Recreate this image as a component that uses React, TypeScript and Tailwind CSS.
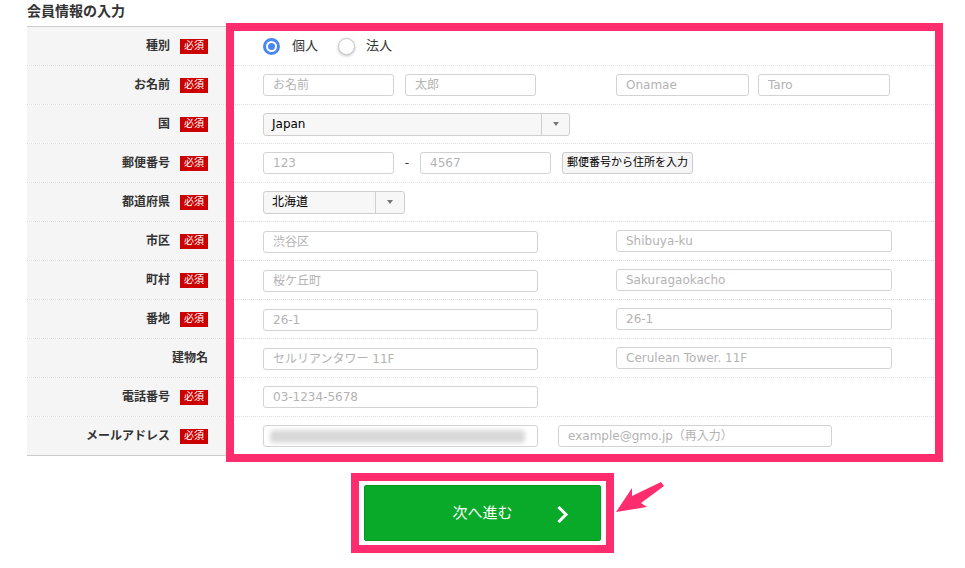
import type { ReactNode } from "react";

function Required() {
  return (
    <span className="ml-[10px] flex h-[15px] w-[28px] items-center justify-center bg-[#cc0000] text-[10px] font-normal leading-none text-white">
      必須
    </span>
  );
}

function Field({ ph, className }: { ph: string; className: string }) {
  return (
    <input
      readOnly
      placeholder={ph}
      className={
        "h-[22px] rounded-[3px] border border-[#d3d3d3] bg-white px-[9px] text-[12px] text-[#333] outline-none placeholder:text-[#b3b3b3] " +
        className
      }
    />
  );
}

function Caret() {
  return <span className="h-0 w-0 border-x-[3.5px] border-t-[4px] border-x-transparent border-t-[#777]" />;
}

function Row({
  label,
  req = true,
  last = false,
  children,
}: {
  label: string;
  req?: boolean;
  last?: boolean;
  children: ReactNode;
}) {
  const edge = last
    ? "border-b border-solid border-[#cccccc]"
    : "border-b border-dotted border-[#dddddd]";
  return (
    <div className={"flex h-[39px] " + edge}>
      <div className="flex w-[199px] shrink-0 items-center justify-end bg-[#f5f5f5] pr-[18px] text-[12px] font-bold text-[#333]">
        <span>{label}</span>
        {req && <Required />}
      </div>
      <div className="flex flex-1 items-center pl-[37px]">{children}</div>
    </div>
  );
}

export default function App() {
  return (
    <div className="relative h-[568px] w-[965px] overflow-hidden bg-white font-['DejaVu_Sans','Noto_Sans_CJK_JP',sans-serif] text-[#333]">
      <div className="pl-[27px]">
        <h1 className="h-[26px] pt-[2px] text-[14px] font-bold leading-[18px] text-[#333]">会員情報の入力</h1>

        <div className="w-[913px] border-t border-[#cccccc]">
          <Row label="種別">
            <div className="flex items-center text-[13px] text-[#333]">
              <span className="flex h-[17px] w-[17px] items-center justify-center rounded-full border-[3px] border-[#4a86f0]">
                <span className="h-[7px] w-[7px] rounded-full bg-[#4a86f0]" />
              </span>
              <span className="ml-[12px]">個人</span>
              <span className="ml-[20px] h-[17px] w-[17px] rounded-full border border-[#c8c8c8] bg-white shadow-[0_1px_3px_rgba(0,0,0,0.25)]" />
              <span className="ml-[11px]">法人</span>
            </div>
          </Row>

          <Row label="お名前">
            <div className="flex w-[353px] gap-[11px]">
              <Field ph="お名前" className="w-[131px]" />
              <Field ph="太郎" className="w-[131px]" />
            </div>
            <div className="flex gap-[9px]">
              <Field ph="Onamae" className="w-[133px]" />
              <Field ph="Taro" className="w-[132px]" />
            </div>
          </Row>

          <Row label="国">
            <div className="flex h-[23px] w-[307px] items-center rounded-[3px] border border-[#cfcfcf] bg-[#f7f7f7]">
              <span className="flex-1 pl-[8px] text-[12px] text-black">Japan</span>
              <span className="flex h-full w-[28px] items-center justify-center border-l border-[#cfcfcf]">
                <Caret />
              </span>
            </div>
          </Row>

          <Row label="郵便番号">
            <Field ph="123" className="w-[131px]" />
            <span className="w-[26px] text-center text-[12px] text-[#333]">-</span>
            <Field ph="4567" className="w-[131px]" />
            <button
              type="button"
              className="ml-[11px] h-[22px] w-[131px] rounded-[3px] border border-[#cccccc] bg-[#f5f5f5] text-[11px] text-black"
            >
              郵便番号から住所を入力
            </button>
          </Row>

          <Row label="都道府県">
            <div className="flex h-[23px] w-[142px] items-center rounded-[3px] border border-[#cfcfcf] bg-[#f7f7f7]">
              <span className="flex-1 pl-[8px] text-[12px] text-black">北海道</span>
              <span className="flex h-full w-[29px] items-center justify-center border-l border-[#cfcfcf]">
                <Caret />
              </span>
            </div>
          </Row>

          <Row label="市区">
            <div className="w-[353px]">
              <Field ph="渋谷区" className="w-[275px]" />
            </div>
            <Field ph="Shibuya-ku" className="w-[276px]" />
          </Row>

          <Row label="町村">
            <div className="w-[353px]">
              <Field ph="桜ケ丘町" className="w-[275px]" />
            </div>
            <Field ph="Sakuragaokacho" className="w-[276px]" />
          </Row>

          <Row label="番地">
            <div className="w-[353px]">
              <Field ph="26-1" className="w-[275px]" />
            </div>
            <Field ph="26-1" className="w-[276px]" />
          </Row>

          <Row label="建物名" req={false}>
            <div className="w-[353px]">
              <Field ph="セルリアンタワー 11F" className="w-[275px]" />
            </div>
            <Field ph="Cerulean Tower. 11F" className="w-[276px]" />
          </Row>

          <Row label="電話番号">
            <Field ph="03-1234-5678" className="w-[275px]" />
          </Row>

          <Row label="メールアドレス" last>
            <div className="flex h-[22px] w-[275px] items-center overflow-hidden rounded-[3px] border border-[#d3d3d3] bg-white px-[6px]">
              <div className="h-[13px] w-[255px] rounded-sm bg-[#d9d9d9] blur-[2px]" />
            </div>
            <Field ph="example@gmo.jp（再入力）" className="ml-[20px] w-[274px]" />
          </Row>
        </div>
      </div>

      <div className="mt-[17px] flex w-full justify-center">
        <div className="border-[8px] border-[#ff2d6e] px-[5px] py-[4px]">
          <button
            type="button"
            className="relative flex h-[56px] w-[237px] items-center justify-center rounded-[2px] border border-[#07991f] bg-[#09aa29] text-[15px] text-white"
          >
            次へ進む
            <svg
              className="absolute right-[31px] top-[20px]"
              width="12"
              height="17"
              viewBox="0 0 12 17"
              fill="none"
            >
              <path d="M2.5 2 L9 8.5 L2.5 15" stroke="white" strokeWidth="3" strokeLinecap="square" />
            </svg>
          </button>
        </div>
      </div>

      {/* annotation overlay */}
      <div className="pointer-events-none absolute left-[226px] top-[23px] h-[439px] w-[717px] border-[8px] border-[#ff2d6e]" />
      <svg
        className="pointer-events-none absolute left-[600px] top-[470px]"
        width="80"
        height="60"
        viewBox="600 470 80 60"
      >
        <polygon
          points="616,512 632,488 632,496 661,482 664,486 641,503 647,507"
          fill="#ff2d6e"
        />
      </svg>
    </div>
  );
}
